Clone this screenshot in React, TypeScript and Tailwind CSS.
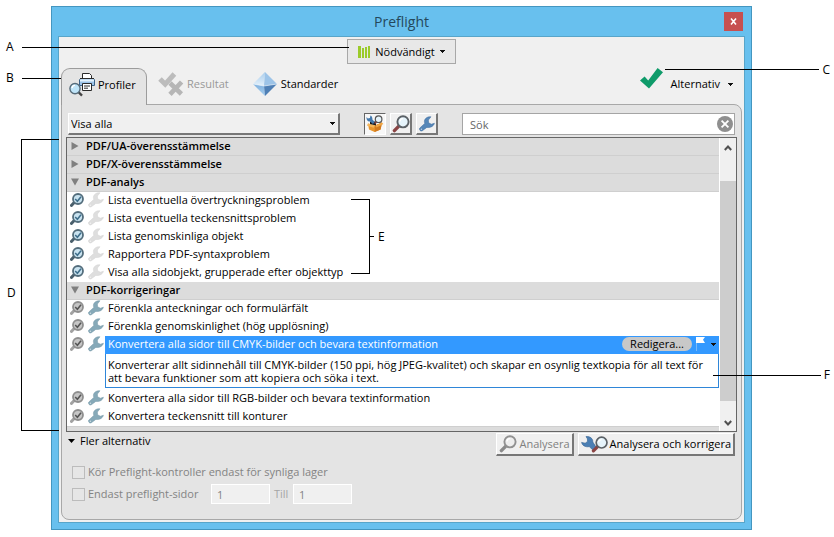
import React from 'react';

interface IconProps {
  muted?: boolean;
}

interface RowProps {
  label: string;
}

interface CalloutProps {
  letter: string;
  className: string;
}

const Caret: React.FC = () => (
  <svg className="w-[5px] h-[3px] shrink-0" viewBox="0 0 5 3" aria-hidden="true" shapeRendering="crispEdges">
    <path d="M0 0H5V1H4V2H3V3H2V2H1V1H0Z" fill="#111" />
  </svg>
);

const WrenchIcon: React.FC<{ color: string; edge: string }> = ({ color, edge }) => (
  <svg className="w-4 h-4 shrink-0" viewBox="0 0 16 16" aria-hidden="true">
    <path
      d="M12 0.8C8.6 0.4 5.4 2.4 5.4 5.6L5.8 7.4L0.8 12C-0.2 13.4 1.4 15.6 3 15L7.8 11.4C11.2 12 14.8 10.2 15.4 7.2L12.4 8.2L9.6 6.8L9.4 4Z"
      fill={color}
      stroke={edge}
      strokeWidth="0.5"
    />
    <circle cx="2.4" cy="13.2" r="0.7" fill="#fff" opacity="0.6" />
  </svg>
);

const CheckLens: React.FC<IconProps> = ({ muted }) => (
  <svg className="w-[14px] h-[14px] shrink-0" viewBox="0 0 14 14" aria-hidden="true">
    <path d="M4.2 9.4L1.4 12.4" stroke={muted ? '#a2a2a2' : '#4a5f6c'} strokeWidth="3" strokeLinecap="round" />
    <circle cx="8" cy="6" r="5" fill={muted ? '#c6c6c6' : '#c9e3f0'} stroke={muted ? '#8f8f8f' : '#536d7c'} strokeWidth="1.8" />
    <path d="M5.2 6L7.4 8.2L11 3.8" fill="none" stroke={muted ? '#555' : '#3f6f8c'} strokeWidth="1.6" />
  </svg>
);

const LensIcon: React.FC<IconProps> = ({ muted }) => (
  <svg className="w-[18px] h-[18px] shrink-0" viewBox="0 0 18 18" aria-hidden="true">
    <path d="M6.6 11.4L2.4 15.6" stroke={muted ? '#8a8a8a' : '#8a4444'} strokeWidth="3.4" strokeLinecap="round" />
    <circle cx="11" cy="6.8" r="5.6" fill={muted ? '#eee' : '#e6f4fb'} stroke={muted ? '#919191' : '#5b6166'} strokeWidth="1.9" />
    <path d="M8 6.4C8 4.8 9.2 3.6 11 3.6" fill="none" stroke="#fff" strokeWidth="1.4" />
  </svg>
);

const PrinterIcon: React.FC = () => (
  <svg className="w-[26px] h-6 shrink-0" viewBox="0 0 26 24" aria-hidden="true">
    <path d="M13.5 5.5V0.5H20.5L22.5 2.5V5.5Z" fill="#fff" stroke="#2a2a2a" />
    <path d="M11.5 5.5H24.5L25.5 7V12.5H10.5V7Z" fill="#9cc3e8" stroke="#3a6288" />
    <path d="M11 7.5H25" stroke="#e3f1fb" strokeWidth="2" />
    <path d="M11 5.5H25" stroke="#2a2a2a" />
    <path d="M13.5 10.5H22.5V17.5H13.5Z" fill="#fff" stroke="#2a2a2a" />
    <path d="M15 13H21M15 15.2H19" stroke="#2a2a2a" />
    <path d="M9.4 19L13 22.6" stroke="#444" strokeWidth="2.4" />
    <circle cx="6" cy="15.6" r="5.1" fill="#bfe4f8" stroke="#566a78" strokeWidth="1.4" />
    <path d="M3 15.2C3.2 13.4 4.4 12.4 6 12.4" fill="none" stroke="#fff" strokeWidth="1.4" />
  </svg>
);

const ResultIcon: React.FC = () => (
  <svg className="w-[26px] h-6 shrink-0" viewBox="0 0 26 24" aria-hidden="true">
    <path d="M2 7L7.2 12.2L16.4 2" fill="none" stroke="#bcbcbc" strokeWidth="5" />
    <path d="M12 11L23.4 22M23.6 10L12 22.4" stroke="#efefef" strokeWidth="6" />
    <path d="M12 11L23.4 22M23.6 10L12 22.4" stroke="#b6b6b6" strokeWidth="4.6" />
  </svg>
);

const CrystalIcon: React.FC = () => (
  <svg className="w-6 h-6 shrink-0" viewBox="0 0 24 24" aria-hidden="true">
    <defs>
      <linearGradient id="crystal-top" x1="0" y1="0" x2="0" y2="1">
        <stop offset="0" stopColor="#a9cdec" />
        <stop offset="1" stopColor="#e4f1fb" />
      </linearGradient>
      <linearGradient id="crystal-low" x1="0" y1="0" x2="0" y2="1">
        <stop offset="0" stopColor="#7fb0de" />
        <stop offset="1" stopColor="#a8d0f0" />
      </linearGradient>
    </defs>
    <path d="M12 0L0 12L11 14Z" fill="url(#crystal-top)" />
    <path d="M12 0L24 12L11 14Z" fill="#9dc4e8" />
    <path d="M0 12L11 14L12 24Z" fill="url(#crystal-low)" />
    <path d="M24 12L11 14L12 24Z" fill="#4f80b6" />
    <path d="M0 12L11 14L24 12" fill="none" stroke="#f2f8fd" strokeWidth="0.6" />
  </svg>
);

const BoxIcon: React.FC = () => (
  <svg className="w-[18px] h-[18px] shrink-0" viewBox="0 0 18 18" aria-hidden="true">
    <path d="M2 8.5L9 10.5L16 7.5L14.6 14.4L8.6 17L3 14.6Z" fill="#e8952c" />
    <path d="M9 10.5L16 7.5L14.6 14.4L8.6 17Z" fill="#d27a1e" />
    <path d="M2 8.5L9 10.5L7.6 12.8L0.8 10.6Z" fill="#f5b65a" />
    <path d="M9 10.5L16 7.5L17.4 9L10.6 12.4Z" fill="#f0a644" />
    <path d="M4 6.6H10V10.4L4 9Z" fill="#1d1d1d" />
    <path d="M4.4 0.4L4 3L1.8 3.6L0.6 2C0 5 2 6.8 4 6.4L7 9L8.8 7L6.4 4.4C6.6 2.4 5.8 0.8 4.4 0.4Z" fill="#4379ad" />
    <circle cx="12.6" cy="4.2" r="3.3" fill="#e5f3fa" stroke="#555" strokeWidth="1.2" />
    <path d="M10.2 6.8L8.8 8.8" stroke="#7d4040" strokeWidth="1.8" />
  </svg>
);

const WrenchLensIcon: React.FC = () => (
  <svg className="w-[27px] h-[17px] shrink-0" viewBox="0 0 27 17" aria-hidden="true">
    <path
      d="M5 0.6C8.8 0 12.2 2.6 11.8 6L15.4 11.6L12.8 14.8L8.2 10.6C4.6 11.4 1.2 9.6 0.6 6.4L4.2 7.2L6.6 5.4L6.4 2.8Z"
      fill="#4b7fb4"
      stroke="#2d5d8f"
      strokeWidth="0.6"
    />
    <path d="M16.4 10.8L12.4 14.8" stroke="#8a4444" strokeWidth="3.2" strokeLinecap="round" />
    <circle cx="20.6" cy="6.6" r="5.4" fill="#e6f4fb" stroke="#5b6166" strokeWidth="1.7" />
    <path d="M17.6 6.2C17.8 4.6 19 3.6 20.6 3.6" fill="none" stroke="#fff" strokeWidth="1.3" />
  </svg>
);

const Triangle: React.FC<{ open?: boolean }> = ({ open }) => (
  <svg className="w-2 h-2 shrink-0" viewBox="0 0 8 8" aria-hidden="true">
    <path d={open ? 'M0 0.5H8L4 7.5Z' : 'M0.5 0L7.5 4L0.5 8Z'} fill="#808080" />
  </svg>
);

const GroupRow: React.FC<RowProps & { open?: boolean }> = ({ label, open }) => (
  <button className="flex w-full h-[18px] items-center gap-[7px] border-b border-[#cfcfcf] bg-[#dcdcdc] pb-px pl-1 text-left font-semibold">
    <Triangle open={open} />
    {label}
  </button>
);

const CheckRow: React.FC<RowProps> = ({ label }) => (
  <li className="flex h-[18px] items-center gap-1 pb-[2px] pl-[3px]">
    <CheckLens />
    <WrenchIcon color="#dedede" edge="#d2d2d2" />
    <span>{label}</span>
  </li>
);

const FixRow: React.FC<RowProps> = ({ label }) => (
  <li className="flex h-[18px] items-center gap-1 pb-[2px] pl-[3px]">
    <CheckLens muted />
    <WrenchIcon color="#86a9b8" edge="#7597a6" />
    <span>{label}</span>
  </li>
);

const Chevron: React.FC<{ d: string }> = ({ d }) => (
  <svg className="w-2 h-2" viewBox="0 0 8 8" aria-hidden="true">
    <path d={d} fill="none" stroke="#505050" strokeWidth="2" />
  </svg>
);

const Callout: React.FC<CalloutProps> = ({ letter, className }) => (
  <span className={`absolute text-xs leading-4 ${className}`}>{letter}</span>
);

const bevel = 'border border-t-white border-l-white border-r-2 border-b-2 border-r-[#777] border-b-[#777]';

const checks = [
  'Lista eventuella övertryckningsproblem',
  'Lista eventuella teckensnittsproblem',
  'Lista genomskinliga objekt',
  'Rapportera PDF-syntaxproblem',
  'Visa alla sidobjekt, grupperade efter objekttyp',
];

const TabBar: React.FC = () => (
  <div className="flex h-9 items-end px-[2px]">
    <button className="relative z-10 -mb-px flex h-[37px] w-[86px] items-center gap-[3px] rounded-t-[9px] border border-b-0 border-[#9c9c9c] bg-[#e4e4e4] pb-1 pl-[7px]">
      <PrinterIcon />
      Profiler
    </button>
    <button className="ml-[11px] flex h-9 items-center gap-[3px] pb-1 text-[#999]">
      <ResultIcon />
      Resultat
    </button>
    <button className="ml-6 flex h-9 items-center gap-1 pb-1">
      <CrystalIcon />
      Standarder
    </button>
    <button className="ml-auto flex h-9 items-center gap-2 pr-[9px] pb-1">
      <svg className="mb-3 w-[23px] h-[21px]" viewBox="0 0 23 21" aria-hidden="true">
        <path d="M0 12.5L4.6 8.6L8.2 12.6L17.6 0L23 4.2L9 20.5Z" fill="#0f9b6a" />
      </svg>
      <span>Alternativ</span>
      <Caret />
    </button>
  </div>
);

const FilterBar: React.FC = () => (
  <div className="flex h-[22px] items-stretch pr-[2px] pl-[2px]">
    <div className="relative w-[272px]">
      <select aria-label="Visa" className={`h-full w-full appearance-none bg-[#f0f0f0] pl-[2px] ${bevel}`}>
        <option>Visa alla</option>
      </select>
      <span className="pointer-events-none absolute top-[9px] right-[5px] flex">
        <Caret />
      </span>
    </div>
    <div className="ml-6 flex gap-1">
      <button
        aria-label="Alla"
        className="flex w-[22px] items-center justify-center border border-t-[#666] border-l-[#666] border-r-white border-b-white bg-[#f7f7f7]"
      >
        <BoxIcon />
      </button>
      <button aria-label="Kontroller" className={`flex w-[22px] items-center justify-center bg-[#f0f0f0] ${bevel}`}>
        <LensIcon />
      </button>
      <button aria-label="Korrigeringar" className={`flex w-[22px] items-center justify-center bg-[#f0f0f0] ${bevel}`}>
        <WrenchIcon color="#5687b8" edge="#39699c" />
      </button>
    </div>
    <div className="relative ml-6 flex-1">
      <input
        type="search"
        aria-label="Sök"
        placeholder="Sök"
        className="h-full w-full border border-[#a5a5a5] bg-white pl-[7px] placeholder:text-[#666]"
      />
      <button aria-label="Rensa" className="absolute top-[3px] right-[2px]">
        <svg className="w-4 h-4" viewBox="0 0 16 16" aria-hidden="true">
          <circle cx="8" cy="8" r="8" fill="#8f8f8f" />
          <path d="M4.6 4.6L11.4 11.4M11.4 4.6L4.6 11.4" stroke="#fff" strokeWidth="1.8" />
        </svg>
      </button>
    </div>
  </div>
);

const ProfileList: React.FC = () => (
  <div className="mt-[2px] flex border border-[#666] bg-white">
    <div className="flex-1">
      <GroupRow label="PDF/UA-överensstämmelse" />
      <GroupRow label="PDF/X-överensstämmelse" />
      <GroupRow label="PDF-analys" open />
      <ul>
        {checks.map((label) => (
          <CheckRow key={label} label={label} />
        ))}
      </ul>
      <GroupRow label="PDF-korrigeringar" open />
      <ul>
        <FixRow label="Förenkla anteckningar och formulärfält" />
        <FixRow label="Förenkla genomskinlighet (hög upplösning)" />
        <li className="flex gap-px pl-[3px]">
          <div className="flex h-[18px] items-center gap-1 pb-[2px]">
            <CheckLens muted />
            <WrenchIcon color="#86a9b8" edge="#7597a6" />
          </div>
          <div className="mb-[2px] flex-1 border-b border-[#2f86d8]">
            <div className="flex h-[18px] items-center bg-[#3399ff] pr-[3px] pb-[2px] pl-[3px] text-white">
              <span className="flex-1">Konvertera alla sidor till CMYK-bilder och bevara textinformation</span>
              <button className="h-[14px] rounded-full bg-[#c8c8c8] px-2 leading-[14px] text-black">Redigera...</button>
              <svg className="ml-1 w-[9px] h-[14px]" viewBox="0 0 9 14" aria-hidden="true">
                <path d="M0.5 0V14" stroke="#79b9f8" />
                <path d="M0 0H9L7 2.8L9 6H0Z" fill="#fff" />
              </svg>
              <span className="ml-[6px]">
                <Caret />
              </span>
            </div>
            <p className="h-[33px] border-x border-[#2f86d8] px-[2px] pt-1 leading-[13px]">
              Konverterar allt sidinnehåll till CMYK-bilder (150 ppi, hög JPEG-kvalitet) och skapar en osynlig textkopia för all text för
              att bevara funktioner som att kopiera och söka i text.
            </p>
          </div>
        </li>
        <FixRow label="Konvertera alla sidor till RGB-bilder och bevara textinformation" />
        <FixRow label="Konvertera teckensnitt till konturer" />
      </ul>
      <div className="h-[5px] border-t border-[#cfcfcf] bg-[#dcdcdc]" />
    </div>
    <div className="ml-px flex w-4 flex-col items-center bg-[#f0f0f0]">
      <div className="flex h-[43px] pt-[6px]">
        <Chevron d="M0.8 6L4 2.5L7.2 6" />
      </div>
      <div className="w-full flex-1 bg-[#cdcdcd]" />
      <div className="flex h-[30px] items-end pb-1">
        <Chevron d="M0.8 2L4 5.5L7.2 2" />
      </div>
    </div>
  </div>
);

const Footer: React.FC = () => (
  <div>
    <div className="flex items-start justify-between pt-px pr-[2px]">
      <button className="flex h-4 items-center gap-[5px] pl-[2px]">
        <svg className="w-[7px] h-1" viewBox="0 0 7 4" aria-hidden="true">
          <path d="M0 0H7L3.5 4Z" fill="#000" />
        </svg>
        Fler alternativ
      </button>
      <div className="flex gap-1">
        <button disabled className={`flex h-[23px] items-center gap-[2px] bg-[#f0f0f0] px-[2px] text-[#808080] ${bevel}`}>
          <LensIcon muted />
          Analysera
        </button>
        <button className={`flex h-[23px] items-center gap-[2px] bg-[#f0f0f0] px-[2px] font-medium ${bevel}`}>
          <WrenchLensIcon />
          Analysera och korrigera
        </button>
      </div>
    </div>
    <div className="pt-[5px] pb-[14px] pl-[6px] text-[#838383]">
      <label className="flex h-[22px] items-center gap-[3px]">
        <input type="checkbox" disabled className="h-[13px] w-[13px] appearance-none border border-[#bcbcbc] bg-[#e6e6e6]" />
        Kör Preflight-kontroller endast för synliga lager
      </label>
      <div className="flex h-[22px] items-center">
        <label className="flex w-[139px] items-center gap-[3px]">
          <input type="checkbox" disabled className="h-[13px] w-[13px] appearance-none border border-[#bcbcbc] bg-[#e6e6e6]" />
          Endast preflight-sidor
        </label>
        <input aria-label="Från sida" disabled defaultValue="1" className="h-5 w-[59px] border border-white bg-[#f0f0f0] px-[5px]" />
        <label htmlFor="to-page" className="w-[23px] pl-1 text-[#a5a5a5]">
          Till
        </label>
        <input id="to-page" disabled defaultValue="1" className="h-5 w-[59px] border border-white bg-[#f0f0f0] px-[5px]" />
      </div>
    </div>
  </div>
);

const Callouts: React.FC = () => (
  <div className="pointer-events-none">
    <Callout letter="A" className="top-[39px] left-[6px]" />
    <div className="absolute top-[47px] left-[22px] w-[327px] border-t border-black" />
    <Callout letter="B" className="top-[70px] left-[6px]" />
    <div className="absolute top-[78px] left-[22px] w-10 border-t border-black" />
    <Callout letter="C" className="top-[62px] right-1" />
    <div className="absolute top-[69px] right-[15px] w-[154px] border-t border-black" />
    <Callout letter="D" className="top-[285px] left-[7px]" />
    <div className="absolute top-[139px] left-[21px] h-[292px] w-[38px] border-y border-l border-black" />
    <Callout letter="E" className="top-[229px] left-[378px]" />
    <div className="absolute top-[199px] left-[351px] h-[75px] w-[19px] border-y border-r border-black" />
    <div className="absolute top-[236px] left-[369px] w-[5px] border-t border-black" />
    <Callout letter="F" className="top-[367px] right-1" />
    <div className="absolute top-[375px] right-[13px] w-[108px] border-t border-black" />
  </div>
);

const App: React.FC = () => {
  return (
    <main className="relative bg-white pt-[6px] pr-[82px] pb-[7px] pl-[51px] font-['Open_Sans','Noto_Sans',sans-serif] text-[11px] leading-4 text-black">
      <section className="border border-[#4496c0] bg-[#68c0ee] px-[6px] pb-[6px]">
        <header className="relative flex h-[29px] items-center justify-center">
          <h1 className="text-[14px] text-[#24485c]">Preflight</h1>
          <button aria-label="Stäng" className="absolute top-[5px] right-[2px] flex h-[19px] w-[19px] items-center justify-center bg-[#c75050]">
            <svg className="w-[7px] h-[7px]" viewBox="0 0 7 7" aria-hidden="true">
              <path d="M1 0.5L6 6.5M6 0.5L1 6.5" stroke="#fff" strokeWidth="1.6" />
            </svg>
          </button>
        </header>
        <div className="border border-[#58a5c9] bg-[#f0f0f0] pt-[2px] pb-[2px]">
          <div className="flex justify-center pb-1">
            <button className="flex h-[25px] items-center border border-[#a8a8a8] bg-[#e8e8e8] px-[10px]">
              <svg className="mr-[5px] w-3 h-3" viewBox="0 0 12 12" aria-hidden="true" shapeRendering="crispEdges">
                <path d="M0 0H3V12H0ZM4 2H6V12H4ZM7 1H9V12H7ZM10 0H12V12H10Z" fill="#9bcb2a" />
              </svg>
              <span className="mr-[5px]">Nödvändigt</span>
              <Caret />
            </button>
          </div>
          <TabBar />
          <div className="mx-[2px] rounded-tr-lg rounded-b-lg border border-[#a8a8a8] bg-[#e4e4e4] px-1 pt-2">
            <FilterBar />
            <ProfileList />
            <Footer />
          </div>
        </div>
      </section>
      <Callouts />
    </main>
  );
};

export default App;
